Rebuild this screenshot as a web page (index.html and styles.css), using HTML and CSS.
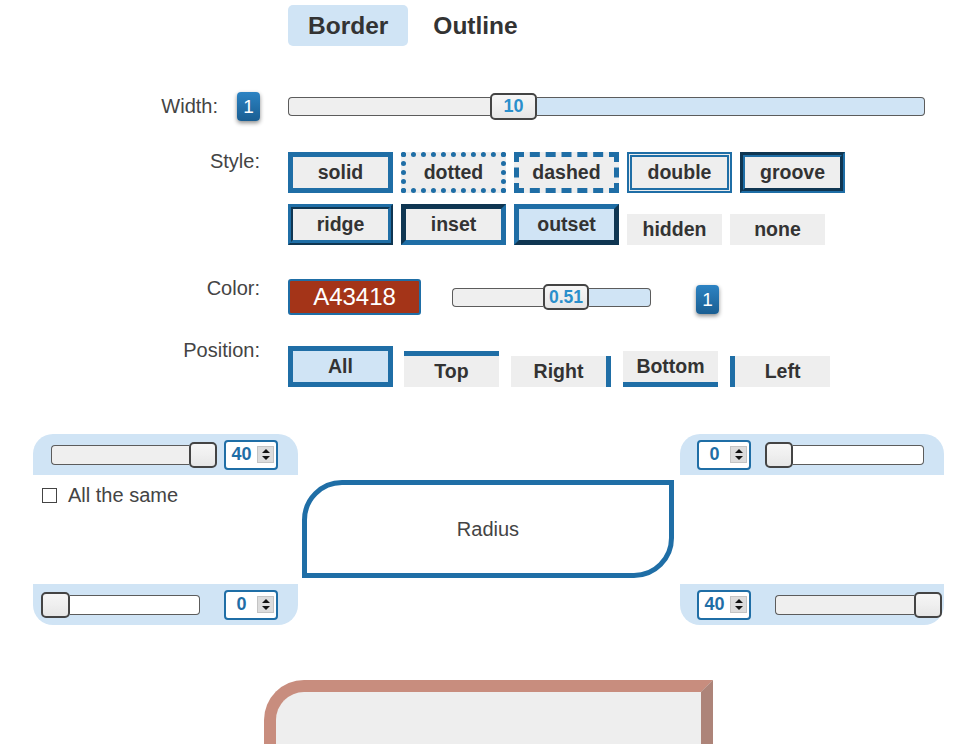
FILE: index.html
```html
<!DOCTYPE html>
<html>
<head>
<meta charset="utf-8">
<link rel="stylesheet" href="styles.css">
</head>
<body>
<div class="page">
  <div class="row tabs-row">
    <div class="label"></div>
    <div class="ctrl tabs"><span class="tab active">Border</span><span class="tab">Outline</span></div>
  </div>

  <div class="row width-row">
    <div class="label">Width:<span class="badge badge-w">1</span></div>
    <div class="ctrl">
      <div class="slider">
        <span class="seg seg-l grey" style="width:202px"></span><span class="knob knob-w">10</span><span class="seg seg-r blue" style="width:388px"></span>
      </div>
    </div>
  </div>

  <div class="row style-row">
    <div class="label">Style:</div>
    <div class="ctrl styles">
      <div class="btn-row">
        <span class="sbtn b-solid">solid</span>
        <span class="sbtn b-dotted">dotted</span>
        <span class="sbtn b-dashed">dashed</span>
        <span class="sbtn b-double">double</span>
        <span class="sbtn b-groove">groove</span>
      </div>
      <div class="btn-row">
        <span class="sbtn b-ridge">ridge</span>
        <span class="sbtn b-inset">inset</span>
        <span class="sbtn b-outset selected">outset</span>
        <span class="sbtn b-hidden">hidden</span>
        <span class="sbtn b-none">none</span>
      </div>
    </div>
  </div>

  <div class="row color-row">
    <div class="label">Color:</div>
    <div class="ctrl colors">
      <span class="swatch">A43418</span>
      <div class="slider op-slider">
        <span class="seg seg-l grey" style="width:91px"></span><span class="knob knob-o">0.51</span><span class="seg seg-r blue" style="width:62px"></span>
      </div>
      <span class="badge badge-o">1</span>
    </div>
  </div>

  <div class="row pos-row">
    <div class="label">Position:</div>
    <div class="ctrl positions">
      <span class="pbtn p-all selected">All</span>
      <span class="pbtn p-top">Top</span>
      <span class="pbtn p-right">Right</span>
      <span class="pbtn p-bottom">Bottom</span>
      <span class="pbtn p-left">Left</span>
    </div>
  </div>

  <div class="radius">
    <div class="panel panel-tl">
      <div class="slider">
        <span class="seg seg-l grey" style="width:138px"></span><span class="knob knob-r"></span>
      </div>
      <div class="spin"><span class="spin-val">40</span><span class="spin-btns"><i class="up"></i><i class="dn"></i></span></div>
    </div>
    <div class="gap-cell"></div>
    <div class="panel panel-tr">
      <div class="spin"><span class="spin-val">0</span><span class="spin-btns"><i class="up"></i><i class="dn"></i></span></div>
      <div class="slider">
        <span class="knob knob-r"></span><span class="seg seg-r white" style="width:131px"></span>
      </div>
    </div>

    <div class="same">
      <span class="checkbox"></span><span class="same-text">All the same</span>
    </div>
    <div class="demo">Radius</div>
    <div class="gap-cell"></div>

    <div class="panel panel-bl">
      <div class="slider">
        <span class="knob knob-r knob-r29"></span><span class="seg seg-r white" style="width:130px"></span>
      </div>
      <div class="spin"><span class="spin-val">0</span><span class="spin-btns"><i class="up"></i><i class="dn"></i></span></div>
    </div>
    <div class="gap-cell"></div>
    <div class="panel panel-br">
      <div class="spin"><span class="spin-val">40</span><span class="spin-btns"><i class="up"></i><i class="dn"></i></span></div>
      <div class="slider">
        <span class="seg seg-l grey" style="width:139px"></span><span class="knob knob-r"></span>
      </div>
    </div>
  </div>

  <div class="preview"></div>
</div>
</body>
</html>
```

FILE: styles.css
```css
html, body {
  margin: 0;
  padding: 0;
  width: 970px;
  height: 744px;
  overflow: hidden;
  background: #fff;
}
body {
  font-family: "Liberation Sans", Arial, sans-serif;
  color: #333;
}
.page {
  width: 970px;
}
.row {
  display: flex;
  align-items: flex-start;
}
.label {
  width: 260px;
  flex: none;
  text-align: right;
  font-size: 20px;
  line-height: 22px;
  color: #444;
}
.ctrl {
  margin-left: 28px;
}

/* tabs */
.tabs-row {
  margin-top: 5px;
}
.tabs {
  display: flex;
  gap: 5px;
}
.tab {
  display: block;
  height: 41px;
  line-height: 41px;
  padding: 0 20px;
  font-size: 24.5px;
  font-weight: bold;
  color: #333;
  border-radius: 5px;
}
.tab.active {
  background: #d0e4f5;
}

/* width row */
.width-row {
  margin-top: 45px;
  height: 30px;
  align-items: center;
}
.width-row .label {
  display: flex;
  justify-content: flex-end;
  align-items: center;
}
.badge {
  display: block;
  width: 23px;
  height: 29px;
  line-height: 29px;
  text-align: center;
  color: #fff;
  font-size: 19px;
  border-radius: 4px;
  background: linear-gradient(#2c83c3, #1a5e92);
  box-shadow: 0 2px 4px rgba(0, 0, 0, 0.45);
}
.badge-w {
  margin-left: 19px;
}

/* sliders */
.slider {
  display: flex;
  align-items: center;
}
.seg {
  display: block;
  height: 19px;
  box-sizing: border-box;
  border: 1px solid #5c5c5c;
}
.seg-l {
  border-right: 0;
  border-radius: 4px 0 0 4px;
}
.seg-r {
  border-left: 0;
  border-radius: 0 4px 4px 0;
}
.grey { background: #efefef; }
.blue { background: #d0e4f5; }
.white { background: #fff; }
.knob {
  display: block;
  box-sizing: border-box;
  border: 2px solid #444;
  border-radius: 5px;
  background: linear-gradient(#f6f6f6 0%, #efefef 50%, #e6e6e6 100%);
  text-align: center;
  color: #2b8fcb;
  font-weight: bold;
}
.knob-w {
  width: 47px;
  height: 27px;
  line-height: 23px;
  font-size: 18px;
}
.knob-o {
  width: 46px;
  height: 26px;
  line-height: 22px;
  font-size: 17.5px;
}
.knob-r {
  width: 28px;
  height: 26px;
}
.knob-r29 {
  width: 29px;
}
.panel .seg {
  height: 20px;
}

/* style buttons */
.style-row {
  margin-top: 29px;
}
.styles {
  padding-top: 2px;
  display: flex;
  flex-direction: column;
  gap: 11px;
}
.btn-row {
  display: flex;
  align-items: flex-end;
  gap: 8px;
}
.sbtn {
  display: block;
  width: 95px;
  height: 31px;
  line-height: 31px;
  text-align: center;
  font-size: 19.5px;
  font-weight: bold;
  color: #333;
  background: #eee;
  border: 5px solid #1f6ea6;
}
.sbtn.selected { background: #d0e4f5; }
.b-dotted { border-style: dotted; }
.b-dashed { border-style: dashed; }
.b-double { border-style: double; }
.b-groove { border-style: groove; }
.b-ridge { border-style: ridge; }
.b-inset { border-style: inset; }
.b-outset { border-style: outset; }
.b-hidden { border-style: hidden; }
.b-none { border-style: none; }

/* color row */
.color-row {
  margin-top: 32px;
}
.colors {
  padding-top: 2px;
  display: flex;
  align-items: center;
}
.swatch {
  display: block;
  box-sizing: border-box;
  width: 133px;
  height: 36px;
  line-height: 32px;
  text-align: center;
  background: #a43418;
  border: 2px solid #1f6ea6;
  border-radius: 3px;
  color: #fff;
  font-size: 24px;
}
.op-slider {
  margin-left: 31px;
}
.badge-o {
  margin-left: 45px;
  margin-top: 5px;
}

/* position row */
.pos-row {
  margin-top: 24px;
}
.positions {
  padding-top: 7px;
  display: flex;
  align-items: flex-end;
  gap: 12px;
}
.pbtn {
  display: block;
  width: 95px;
  height: 31px;
  line-height: 31px;
  text-align: center;
  font-size: 19.5px;
  font-weight: bold;
  color: #333;
  background: #eee;
  border: 0 solid #1f6ea6;
}
.pbtn.selected { background: #d0e4f5; }
.p-all { border-width: 5px; margin-right: -1px; }
.p-top { border-top-width: 5px; }
.p-right { border-right-width: 5px; }
.p-bottom { border-bottom-width: 5px; }
.p-left { border-left-width: 5px; }

/* radius section */
.radius {
  margin-top: 47px;
  padding-left: 33px;
  display: grid;
  grid-template-columns: 265px 382px 264px;
  grid-template-rows: 41px 109px 41px;
}
.panel {
  background: #d0e4f5;
  display: flex;
  align-items: center;
}
.panel-tl {
  border-radius: 20px 20px 0 0;
  padding-left: 18px;
  gap: 7px;
}
.panel-tr {
  border-radius: 20px 20px 0 0;
  padding-left: 17px;
  gap: 14px;
}
.panel-bl {
  border-radius: 0 0 20px 20px;
  padding-left: 8px;
  gap: 24px;
}
.panel-br {
  border-radius: 0 0 20px 20px;
  padding-left: 17px;
  gap: 24px;
}
.spin {
  box-sizing: border-box;
  width: 54px;
  height: 30px;
  background: #fff;
  border: 2px solid #1f6ea6;
  border-radius: 4px;
  display: flex;
  align-items: center;
}
.spin-val {
  width: 31px;
  text-align: center;
  font-size: 18px;
  font-weight: bold;
  color: #1f6ea6;
}
.spin-btns {
  box-sizing: border-box;
  width: 17px;
  height: 17px;
  background: #dcdcdc;
  border: 1px solid #c4c4c4;
  display: flex;
  flex-direction: column;
  align-items: center;
  justify-content: space-around;
}
.spin-btns i {
  display: block;
  width: 0;
  height: 0;
  border-left: 4px solid transparent;
  border-right: 4px solid transparent;
}
.spin-btns .up {
  border-bottom: 4px solid #111;
}
.spin-btns .dn {
  border-top: 4px solid #111;
}
.same {
  padding-top: 9px;
  padding-left: 9px;
  display: flex;
  align-items: center;
  align-self: start;
}
.checkbox {
  display: block;
  box-sizing: border-box;
  width: 15px;
  height: 15px;
  border: 1px solid #444;
  background: #fff;
}
.same-text {
  margin-left: 11px;
  font-size: 20px;
  line-height: 22px;
  color: #444;
}
.demo {
  margin: 5px 6px 0 4px;
  height: 98px;
  box-sizing: border-box;
  border: 5px solid #1f6ea6;
  border-radius: 40px 0 40px 0;
  display: flex;
  align-items: center;
  justify-content: center;
  font-size: 20px;
  color: #444;
}

/* preview */
.preview {
  margin-top: 55px;
  margin-left: 264px;
  width: 425px;
  height: 200px;
  background: #eee;
  border: 12px solid;
  border-color: #c88d7e #ad8479 #ad8479 #c88d7e;
  border-radius: 40px 0 40px 0;
}
```
